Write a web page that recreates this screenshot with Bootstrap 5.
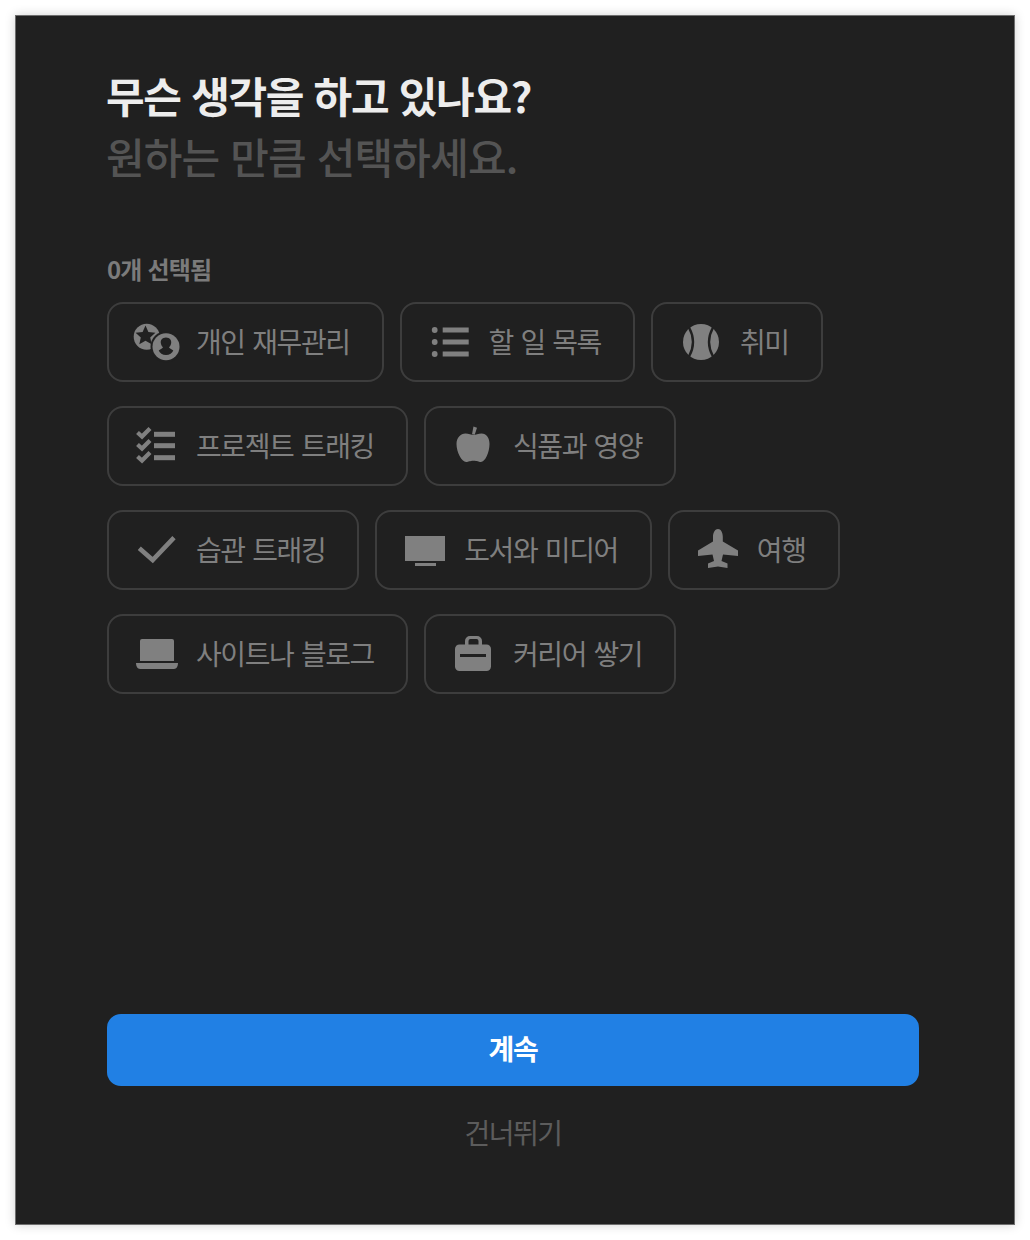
<!DOCTYPE html>
<html lang="ko">
<head>
    <meta charset="UTF-8">
    <meta name="viewport" content="width=device-width, initial-scale=1.0">
    <title>Onboarding</title>
    <link href="https://cdn.jsdelivr.net/npm/bootstrap@5.3.1/dist/css/bootstrap.min.css" rel="stylesheet">
    <style>
        body {
            font-family: "Noto Sans CJK KR", "Noto Sans", sans-serif;
            background-color: #fff;
            padding: 15px;
        }

        .setup-panel {
            height: 1210px;
            padding: 48px 95px 67px 91px;
            background-color: #202020;
            border: 1px solid #6e6e6e;
            box-shadow: 0 0 10px rgba(0, 0, 0, 0.18);
        }

        .setup-title {
            font-size: 42px;
            line-height: 61px;
            font-weight: 700;
            letter-spacing: -1.3px;
            margin: 0 0 65px -1px;
            color: #ededed;
        }

        .setup-title span {
            display: block;
            font-weight: 500;
            letter-spacing: -0.85px;
            color: #545454;
        }

        .picked-count {
            font-size: 24px;
            line-height: 36px;
            font-weight: 700;
            letter-spacing: -0.8px;
            color: #7b7b7b;
            margin-bottom: 15px;
        }

        .topic-list {
            column-gap: 16px;
            row-gap: 24px;
        }

        .topic-chip {
            height: 80px;
            padding: 0 32px 0 24px;
            border: 2px solid #3d3d3d;
            border-radius: 16px;
            color: #7f7f7f;
            font-size: 28px;
            font-weight: 400;
            letter-spacing: -1.4px;
            word-spacing: 1px;
            line-height: 1;
        }

        .topic-chip svg {
            width: 48px;
            height: 48px;
            flex: none;
            margin-right: 15px;
        }

        .topic-chip span {
            padding-bottom: 2px;
        }

        .continue-btn {
            height: 72px;
            padding-bottom: 10px;
            border: 0;
            border-radius: 14px;
            background-color: #2180e4;
            font-size: 28px;
            font-weight: 700;
            letter-spacing: -1.3px;
        }

        .skip-btn {
            margin-top: 21px;
            padding: 0;
            border: 0;
            font-size: 28px;
            line-height: 50px;
            letter-spacing: -1.5px;
            color: #5c5c5c;
            text-decoration: none;
        }
    </style>
</head>
<body>

    <div class="setup-panel d-flex flex-column">
        <h1 class="setup-title">무슨 생각을 하고 있나요?<span>원하는 만큼 선택하세요.</span></h1>
        <div class="picked-count">0개 선택됨</div>

        <div class="topic-list d-flex flex-wrap">
            <button type="button" class="btn topic-chip d-flex align-items-center">
                <svg viewBox="0 0 48 48" fill="#808080">
                    <circle cx="13.700" cy="18.700" r="13"/>
                    <path fill="#202020" d="M12.500 7.500l2.900 6.400 7 .8-5.200 4.700 1.500 6.900-6.200-3.500-6.200 3.500 1.500-6.900-5.200-4.700 7-.8z"/>
                    <circle cx="33" cy="28.700" r="15.500" fill="#202020"/>
                    <circle cx="33" cy="28.700" r="13.500"/>
                    <path fill="#202020" d="M33 19.500c3.800 0 5.600 2.800 5.200 5.600-.2 1.900-1.100 3.300-2.200 4.200.8 1.400 3 2 4.300 3.200-1 2.400-3.800 4.500-7.300 4.500s-6.300-2.100-7.300-4.500c1.300-1.200 3.500-1.800 4.300-3.200-1.100-.9-2-2.300-2.200-4.200-.4-2.800 1.400-5.600 5.200-5.600z"/>
                </svg>
                <span>개인 재무관리</span>
            </button>
            <button type="button" class="btn topic-chip d-flex align-items-center">
                <svg viewBox="0 0 48 48" fill="#808080">
                    <circle cx="8.700" cy="12" r="2.900"/>
                    <circle cx="8.700" cy="24" r="2.900"/>
                    <circle cx="8.700" cy="36" r="2.900"/>
                    <rect x="16.700" y="9.500" width="26" height="5"/>
                    <rect x="16.700" y="21.500" width="26" height="5"/>
                    <rect x="16.700" y="33.500" width="26" height="5"/>
                </svg>
                <span>할 일 목록</span>
            </button>
            <button type="button" class="btn topic-chip d-flex align-items-center">
                <svg viewBox="0 0 48 48">
                    <circle cx="24" cy="24" r="18" fill="#808080"/>
                    <path d="M12 9.500Q20 24 12 38.500M36 9.500Q28 24 36 38.500" fill="none" stroke="#202020" stroke-width="2.400"/>
                </svg>
                <span>취미</span>
            </button>
            <button type="button" class="btn topic-chip d-flex align-items-center">
                <svg viewBox="0 0 48 48" fill="#808080">
                    <path d="M4.500 10.500l4.500 4 8-8M4.500 22.500l4.500 4 8-8M4.500 34.500l4.500 4 8-8" fill="none" stroke="#808080" stroke-width="4.200"/>
                    <rect x="21" y="9.800" width="21" height="5"/>
                    <rect x="21" y="21.200" width="21" height="5"/>
                    <rect x="21" y="33.200" width="21" height="5"/>
                </svg>
                <span>프로젝트 트래킹</span>
            </button>
            <button type="button" class="btn topic-chip d-flex align-items-center">
                <svg viewBox="0 0 48 48" fill="#808080">
                    <path d="M23.500 4.500l3.500 1.300-2.300 7-2.700-.6z"/>
                    <path d="M15.500 11.500c3 0 6 1.500 8 1.500s5-1.500 8-1.500c5 0 8 4.500 8 10.500 0 8-4.200 18-8.700 18-2.500 0-3.300-1.200-7.300-1.200s-4.800 1.200-7.300 1.200C11.700 40 6.500 30 6.500 22c0-6 4-10.500 9-10.500z"/>
                </svg>
                <span>식품과 영양</span>
            </button>
            <button type="button" class="btn topic-chip d-flex align-items-center">
                <svg viewBox="0 0 48 48">
                    <path d="M6.300 22.300L19.700 34 41 11.700" fill="none" stroke="#808080" stroke-width="4.600"/>
                </svg>
                <span>습관 트래킹</span>
            </button>
            <button type="button" class="btn topic-chip d-flex align-items-center">
                <svg viewBox="0 0 48 48" fill="#808080">
                    <rect x="4" y="10" width="40" height="25"/>
                    <rect x="14" y="37" width="21" height="3"/>
                </svg>
                <span>도서와 미디어</span>
            </button>
            <button type="button" class="btn topic-chip d-flex align-items-center">
                <svg viewBox="0 0 48 48" fill="#808080">
                    <path d="M24 3c2.800 0 4.800 3.500 4.800 8v4.500L44 24.500V30L29 28.500l-1.500 6.500 6 2.500V42L24 40.500 14 42v-4.500l6-2.500-1.500-6.500L4 30v-5.500l15-9V11C19 6.500 21.200 3 24 3z"/>
                </svg>
                <span>여행</span>
            </button>
            <button type="button" class="btn topic-chip d-flex align-items-center">
                <svg viewBox="0 0 48 48" fill="#808080">
                    <path d="M9 9h30a2 2 0 0 1 2 2v20H7V11a2 2 0 0 1 2-2z"/>
                    <path d="M3 33h42c0 3-1.500 6-4 6H7c-2.500 0-4-3-4-6z"/>
                </svg>
                <span>사이트나 블로그</span>
            </button>
            <button type="button" class="btn topic-chip d-flex align-items-center">
                <svg viewBox="0 0 48 48" fill="#808080">
                    <path d="M15 15v-4a5 5 0 0 1 5-5h7a5 5 0 0 1 5 5v4h-3.500v-4a2 2 0 0 0-2-2h-6a2 2 0 0 0-2 2v4z"/>
                    <rect x="5" y="14.500" width="36" height="26.500" rx="4.500"/>
                    <rect x="10" y="24" width="26" height="3" fill="#202020"/>
                </svg>
                <span>커리어 쌓기</span>
            </button>
        </div>

        <div class="mt-auto d-flex flex-column align-items-center">
            <button type="button" class="btn btn-primary continue-btn w-100">계속</button>
            <button type="button" class="btn btn-link skip-btn">건너뛰기</button>
        </div>
    </div>

    <script src="https://cdn.jsdelivr.net/npm/bootstrap@5.3.1/dist/js/bootstrap.bundle.min.js"></script>
</body>
</html>
